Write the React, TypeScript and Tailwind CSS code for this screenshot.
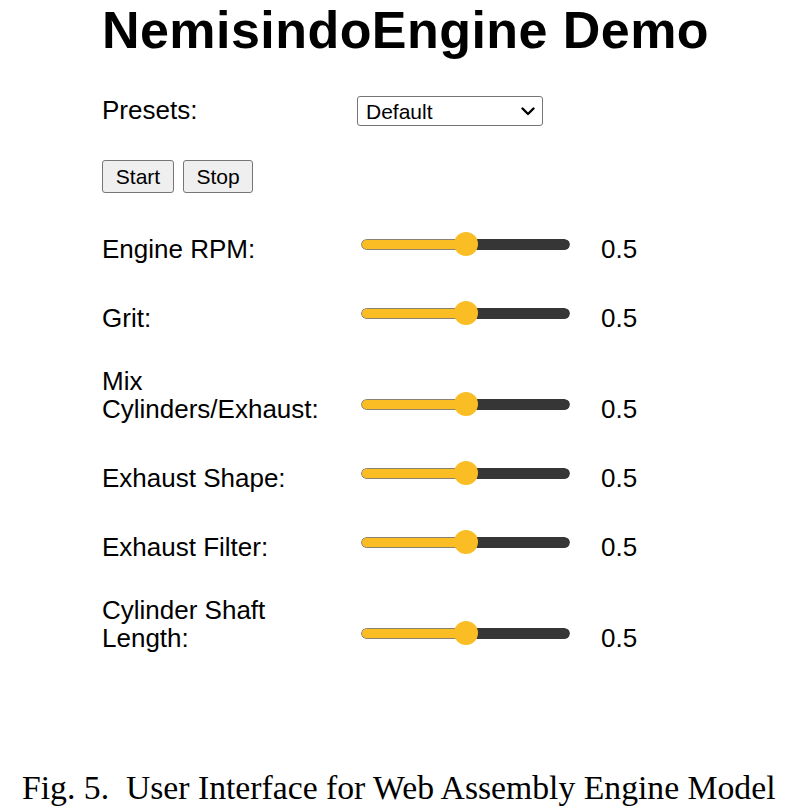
import React from 'react';

interface SliderRow {
  label: string;
  value: number;
}

const rows: SliderRow[] = [
  { label: 'Engine RPM:', value: 0.5 },
  { label: 'Grit:', value: 0.5 },
  { label: 'Mix Cylinders/Exhaust:', value: 0.5 },
  { label: 'Exhaust Shape:', value: 0.5 },
  { label: 'Exhaust Filter:', value: 0.5 },
  { label: 'Cylinder Shaft Length:', value: 0.5 },
];

// Drawn range slider, thumb sits over the track
const Slider = ({ value }: { value: number }) => {
  const width = 209;
  const pos = Math.round(width * value);
  return (
    <div className="relative ml-[5px] h-[34px] w-[209px] shrink-0">
      <div className="absolute left-0 right-0 top-[10px] flex h-[11px] overflow-hidden rounded-full">
        <div
          className="h-full rounded-l-full border border-[#8a8170] bg-[#fbbd24]"
          style={{ width: pos }}
        />
        <div className="h-full flex-1 rounded-r-full bg-[#363636]" />
      </div>
      <div
        className="absolute top-[3px] h-[24px] w-[24px] rounded-full bg-[#fbbd24]"
        style={{ left: pos - 12 }}
      />
    </div>
  );
};

export default function App() {
  return (
    <div className="flex min-h-[807px] w-[789px] flex-col bg-white font-['Liberation_Sans',Arial,sans-serif] text-black">
      <div className="pl-[102px] pt-[1px]">
        <h1 className="text-[52px] font-bold leading-[58px] tracking-[0.45px]">NemisindoEngine Demo</h1>

        <div className="mt-[37px] flex items-start">
          <div className="w-[255px] text-[26px] leading-[28px]">Presets:</div>
          <div className="flex h-[30px] w-[186px] items-center justify-between rounded-[3px] border border-[#767676] bg-white pl-[8px] pr-[7px]">
            <span className="text-[21px] leading-none">Default</span>
            <svg width="14" height="9" viewBox="0 0 14 9" fill="none">
              <path d="M1.5 1.5 L7 7 L12.5 1.5" stroke="black" strokeWidth="2.4" strokeLinecap="round" strokeLinejoin="round" />
            </svg>
          </div>
        </div>

        <div className="mt-[34px] flex gap-[9px]">
          <button className="h-[33px] w-[72px] rounded-[3px] border border-[#767676] bg-[#efefef] text-[21px] leading-none">
            Start
          </button>
          <button className="h-[33px] w-[70px] rounded-[3px] border border-[#767676] bg-[#efefef] text-[21px] leading-none">
            Stop
          </button>
        </div>

        <div className="mt-[36px] flex flex-col gap-[35px]">
          {rows.map((r) => (
            <div key={r.label} className="flex items-end">
              <div className="w-[254px] shrink-0 text-[26px] leading-[28px]">{r.label}</div>
              <Slider value={r.value} />
              <div className="ml-[31px] text-[26px] leading-[28px]">{r.value.toFixed(1)}</div>
            </div>
          ))}
        </div>
      </div>

      <p className="mt-[119px] pl-[22px] font-['Liberation_Serif','Times_New_Roman',serif] text-[33.7px] leading-[34px] whitespace-pre">
        {'Fig. 5.  User Interface for Web Assembly Engine Model'}
      </p>
    </div>
  );
}
